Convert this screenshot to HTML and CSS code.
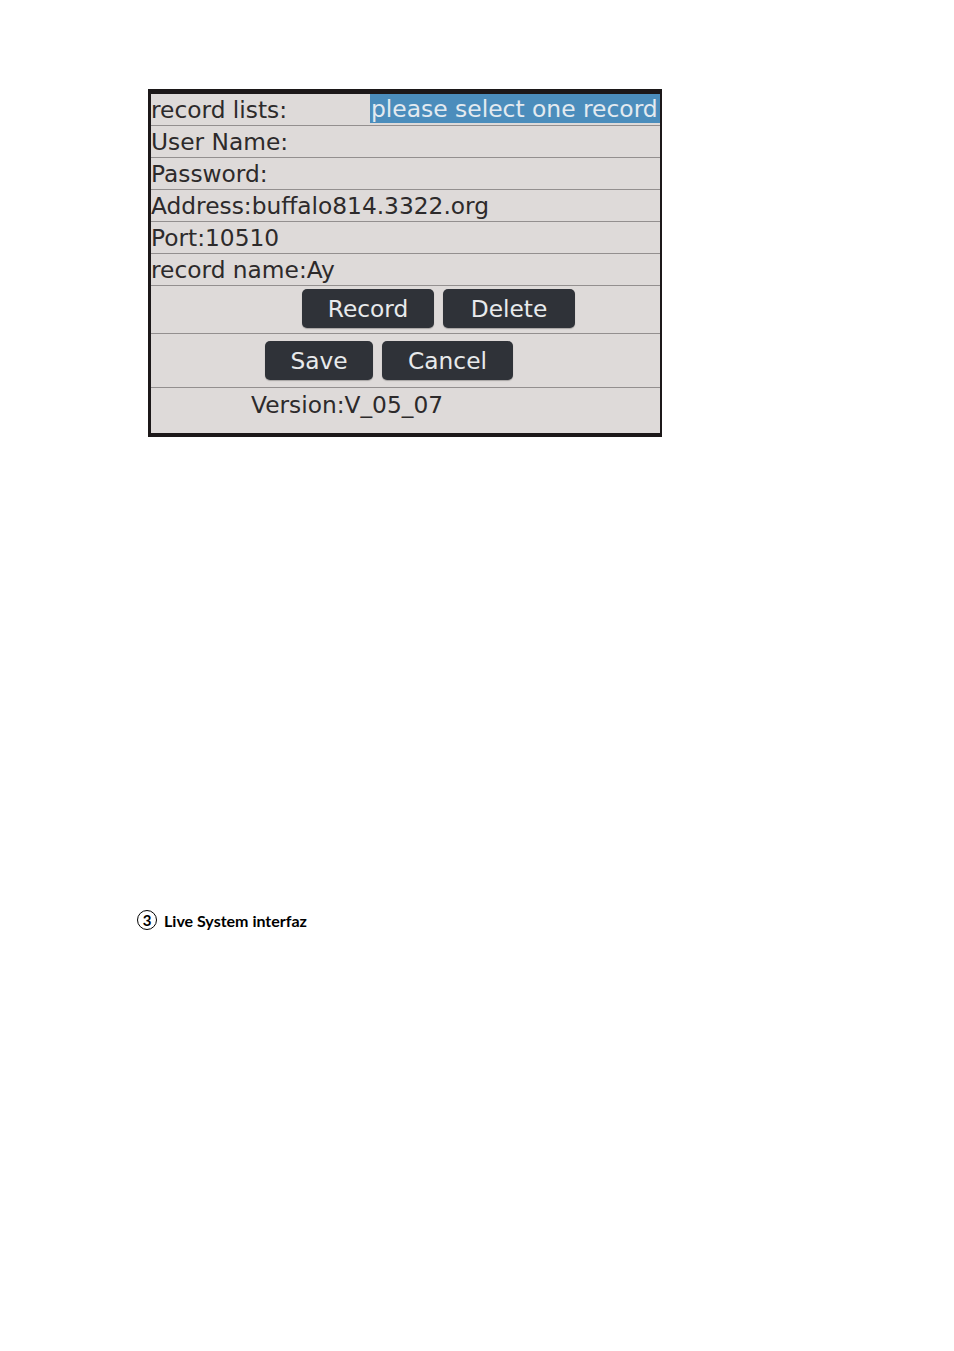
FILE: index.html
```html
<!DOCTYPE html>
<html>
<head>
<meta charset="utf-8">
<link rel="stylesheet" href="styles.css">
</head>
<body>
<div class="screen">
  <div class="row row-first">
    <span class="label-fixed">record lists:</span>
    <span class="select">please select one record</span>
  </div>
  <div class="row">User Name:</div>
  <div class="row">Password:</div>
  <div class="row">Address:buffalo814.3322.org</div>
  <div class="row">Port:10510</div>
  <div class="row">record name:Ay</div>
  <div class="row btn-row btn-row-1">
    <span class="btn btn-record">Record</span>
    <span class="btn btn-delete">Delete</span>
  </div>
  <div class="row btn-row btn-row-2">
    <span class="btn btn-save">Save</span>
    <span class="btn btn-cancel">Cancel</span>
  </div>
  <div class="row version">Version:V_05_07</div>
</div>
<p class="caption"><span class="num">3</span><span class="cap-text">Live System interfaz</span></p>
</body>
</html>
```
FILE: styles.css
```css
html, body {
  margin: 0;
  padding: 0;
  background: #ffffff;
}
body {
  width: 954px;
  height: 1351px;
  font-family: "DejaVu Sans", sans-serif;
}
.screen {
  margin: 89px 0 0 148px;
  width: 509px;
  border-style: solid;
  border-color: #1c1819;
  border-width: 5px 2px 4px 3px;
  background: #dedad9;
  display: flex;
  flex-direction: column;
  color: #2d2a2b;
  font-size: 23.3px;
}
.row {
  box-sizing: border-box;
  height: 32px;
  line-height: 31px;
  border-bottom: 1px solid #938f8f;
  white-space: nowrap;
  overflow: hidden;
}
.row-first {
  display: flex;
  align-items: flex-start;
}
.label-fixed {
  width: 219px;
  flex: none;
}
.select {
  flex: 1;
  height: 29px;
  line-height: 30px;
  background: #4b8dbc;
  color: #e3eaf0;
  padding-left: 1px;
  font-size: 23.4px;
}
.btn-row {
  display: flex;
  align-items: flex-start;
  gap: 9px;
}
.btn-row-1 {
  height: 48px;
  padding: 3px 0 0 151px;
}
.btn-row-2 {
  height: 54px;
  padding: 7px 0 0 114px;
}
.btn {
  box-sizing: border-box;
  height: 39px;
  line-height: 39px;
  background: #2f3238;
  color: #e8eaec;
  border-radius: 5px;
  text-align: center;
  box-shadow: 0 1px 1px rgba(0,0,0,0.25);
}
.btn-record { width: 132px; }
.btn-delete { width: 132px; }
.btn-save { width: 108px; }
.btn-cancel { width: 131px; }
.version {
  height: 45px;
  border-bottom: none;
  padding: 1px 0 0 100px;
}
.caption {
  margin: 473px 0 0 137px;
  display: flex;
  align-items: center;
  font-family: Lato, "Liberation Sans", sans-serif;
  font-weight: bold;
  font-size: 16px;
  color: #000;
  height: 20px;
}
.num {
  box-sizing: border-box;
  width: 20px;
  height: 20px;
  border: 1.8px solid #000;
  border-radius: 50%;
  display: flex;
  align-items: center;
  justify-content: center;
  font-size: 15px;
  line-height: 1;
  margin-right: 7px;
}
```
